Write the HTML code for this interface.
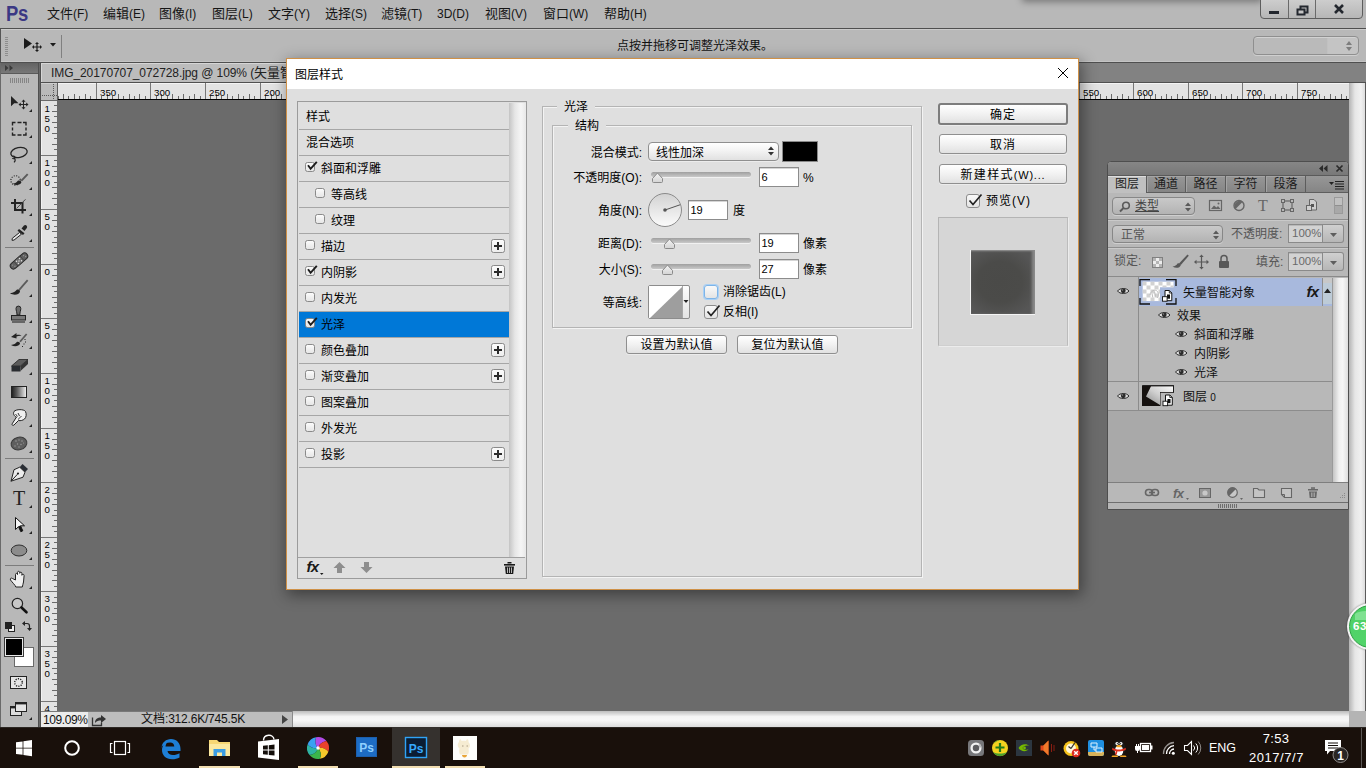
<!DOCTYPE html>
<html lang="zh-CN">
<head>
<meta charset="utf-8">
<title>Photoshop - 图层样式</title>
<style>
*{box-sizing:border-box;margin:0;padding:0}
html,body{width:1366px;height:768px;overflow:hidden;background:#6b6b6b}
body{position:relative;font-family:"Liberation Sans","Noto Sans CJK SC",sans-serif;font-size:12px;color:#111;line-height:1}
.abs,.abs-all *{position:absolute}
div,svg,i{position:absolute;display:block}
/* ---------- menubar ---------- */
#menubar{left:0;top:0;width:1366px;height:28px;background:#b8b8b8}
#menubar .mi{top:6px;font-size:13px;line-height:16px;color:#151515;white-space:nowrap}
#pslogo{left:6px;top:1px;font-size:22.500px;font-weight:bold;color:#3b3884;line-height:25px;letter-spacing:-.5px;transform:scaleX(.82);transform-origin:0 0}
.l{font-size:12px}
#winctl{left:1260px;top:-1px;width:103px;height:20px;border:1px solid #5d5d5d;border-radius:0 0 4px 4px;background:linear-gradient(#cdcdcd,#b6b6b6)}
#winctl i{top:0;width:1px;height:18px;background:#6a6a6a}
/* ---------- options bar ---------- */
#optbar{left:0;top:28px;width:1366px;height:35px;background:#b8b8b8;border-top:1px solid #4f4f4f;border-bottom:1px solid #4f4f4f;border-left:1px solid #555;box-shadow:inset 0 -1px 0 #c4c4c4}
#optbar .hl{left:0;top:0;width:1366px;height:1px;background:#cbcbcb}
#hint{left:616px;top:9px;font-size:12px;line-height:16px;color:#111;white-space:nowrap}
#wsdrop{left:1252px;top:7px;width:106px;height:19px;border:1px solid #8f8f8f;border-radius:4px;background:linear-gradient(90deg,#bababa 0,#bababa 70%,#c4c4c4 71%,#c4c4c4 100%);box-shadow:inset 0 1px 0 #d2d2d2,0 1px 0 #cfcfcf}
/* ---------- tools ---------- */
#tools{left:0;top:63px;width:39px;height:664px;background:#b8b8b8;border-right:1px solid #505050;border-left:1px solid #6a6a6a}
#tools .hd{left:0;top:0;width:37px;height:11px;background:linear-gradient(#636363,#787878);border-bottom:1px solid #5a5a5a}
#tools .sep{left:11px;width:26px;height:1px;background:#8a8a8a}
/* ---------- doc area ---------- */
#tabbar{left:41px;top:63px;width:1325px;height:20px;background:#828282;border-bottom:1px solid #505050}
#tab{left:0;top:0;width:400px;height:19px;background:#bcbcbc;font-size:13px;line-height:19px;color:#222;white-space:nowrap;padding-left:10px;box-shadow:inset 1px 1px 0 #d6d6d6}
#gap{left:39px;top:63px;width:2px;height:664px;background:linear-gradient(90deg,#6a6a6a 50%,#505050 50%)}
#hruler{left:58px;top:83px;width:1291px;height:17px;background:#e3e3e3;border-bottom:1px solid #000;box-shadow:inset 0 1px 0 #f4f4f4;overflow:hidden}
#vruler{left:41px;top:101px;width:17px;height:611px;background:#e3e3e3;border-right:1px solid #6a6a6a;box-shadow:inset 1px 0 0 #f2f2f2;overflow:hidden}
#rcorner{left:41px;top:83px;width:17px;height:18px;background:#bababa;border-right:1px solid #5e5e5e;border-bottom:1px solid #6a6a6a;box-shadow:inset 0 1px 0 #cfcfcf}
#canvas{left:58px;top:100px;width:1291px;height:611px;background:#6b6b6b}
#vscroll{left:1349px;top:83px;width:17px;height:628px;background:linear-gradient(90deg,#b4b4b4,#e6e6e6 35%,#f0f0f0 70%,#dedede 93%,#5a5a5a 94%)}
#status{left:41px;top:711px;width:1325px;height:16px;background:#bdbdbd;box-shadow:inset 0 1px 0 #787878}
#hscroll{left:251px;top:0;width:1057px;height:16px;background:linear-gradient(#bcbcbc,#f4f4f4 35%,#f6f6f6 60%,#dcdcdc);border-left:1px solid #8a8a8a}
#scorner{left:1308px;top:0;width:17px;height:16px;background:#b4b4b4}

/* ---------- dialog ---------- */
#dlg{left:286px;top:58px;width:793px;height:532px;border:1px solid #cf9148;background:#dfdfdf;box-shadow:2px 4px 14px 1px rgba(0,0,0,.42);font-size:12px;color:#000}
#dlg .tb{left:0;top:0;width:791px;height:30px;background:#fff}
#dlg .tt{left:8px;top:8px;font-size:12px;line-height:16px;color:#000}
#lst{border:1px solid #9b9b9b;background:#dfdfdf}
#lst .in{left:0;top:1px;width:212px;height:454px;border-top:1px solid #a8a8a8;border-left:1px solid #c9c9c9}
.row{left:1px;width:211px;height:26px;border-bottom:1px solid #a6a6a6;line-height:16px;white-space:nowrap}
.row .t{top:5px;font-size:12px}
.row.sel{background:#0078d7}
.cb{width:10px;height:10px;border:1px solid #8a8a8a;border-radius:2.500px;background:linear-gradient(#fbfbfb,#e6e6e6)}
.cb14{width:14px;height:14px;border:1px solid #8c8c8c;border-radius:3px;background:linear-gradient(#f9f9f9,#e4e4e4)}
.plus{width:14px;height:14px;border:1px solid #8a8a8a;border-radius:2.500px;background:linear-gradient(#fbfbfb,#ededed)}
.plus:before,.plus:after{content:"";position:absolute;background:#2a2a2a}
.plus:before{left:2px;top:5px;width:8px;height:2px}
.plus:after{left:5px;top:2px;width:2px;height:8px}
.fs{border:1px solid #b4b4b4;box-shadow:inset 1px 1px 0 #f3f3f3,1px 1px 0 #f3f3f3}
.lg{background:#dfdfdf;font-size:12px;line-height:14px;text-align:center;white-space:nowrap}
.lbl{font-size:12px;line-height:16px;white-space:nowrap;text-align:right}
.txt{font-size:12px;line-height:16px;white-space:nowrap}
.inp{width:40px;height:20px;border:1px solid #8c8c8c;background:#fff;font-size:11px;line-height:19px;padding-left:1.500px;box-shadow:inset 0 1px 0 #d5d5d5}
.trk{height:5px;border-radius:3px;background:linear-gradient(#9f9f9f,#c9c9c9);box-shadow:0 1px 0 #f1f1f1}
.btn{border:1px solid #8f8f8f;border-radius:3px;background:linear-gradient(#ffffff,#f3f3f3 45%,#e1e1e1);font-size:12px;line-height:18px;text-align:center;white-space:nowrap;box-shadow:0 1px 0 #ececec}

/* ---------- layers panel ---------- */
#lp{left:1107px;top:161px;width:242px;height:349px;background:#b8b8b8;border:1px solid #4e4e4e;border-radius:4px 4px 0 0;overflow:hidden;font-size:12px;color:#111}
#lp .hd{left:0;top:0;width:240px;height:13px;background:linear-gradient(#868686,#787878)}
#lp .tabs{left:0;top:13px;width:240px;height:18px;background:linear-gradient(#979797,#858585);border-top:1px solid #5a5a5a;border-bottom:1px solid #5e5e5e}
#lp .tab{top:0;height:16px;width:40px;border-right:1px solid #5c5c5c;font-size:12px;line-height:17px;text-align:center;color:#1c1c1c;white-space:nowrap;box-shadow:inset 1px 1px 0 #a4a4a4}
#lp .tab.on{background:#c0c0c0;height:17px;box-shadow:inset 0 1px 0 #dcdcdc}
#lp .sel{border:1px solid #878787;border-radius:4px;background:linear-gradient(#c9c9c9,#b3b3b3);box-shadow:0 1px 0 #cfcfcf;font-size:12px;line-height:16px;color:#3a3a3a;white-space:nowrap}
#lp .hr{left:0;width:240px;height:2px;background:#8e8e8e;border-bottom:1px solid #c9c9c9}
#lp .t{font-size:12px;line-height:16px;white-space:nowrap}
#lp .gt{font-size:12px;line-height:16px;white-space:nowrap;color:#555}
#lp .num{border:1px solid #8a8a8a;background:#d2d2d2;font-size:11.500px;line-height:17px;color:#6a6a6a;padding-left:3px;box-shadow:inset 0 1px 0 #b9b9b9}
#lp .dd{border:1px solid #8a8a8a;border-left:none;border-radius:0 3px 3px 0;background:linear-gradient(#d0d0d0,#b6b6b6)}
/* ---------- taskbar ---------- */
#taskbar{left:0;top:727px;width:1366px;height:41px;background:#19100b;box-shadow:inset 0 1px 0 #2c2723}
</style>
</head>
<body>
<div id="menubar">
<div id="pslogo">Ps</div>
<div class="mi" style="left:47px">文件<span class="l">(F)</span></div>
<div class="mi" style="left:103px">编辑<span class="l">(E)</span></div>
<div class="mi" style="left:159px">图像<span class="l">(I)</span></div>
<div class="mi" style="left:212px">图层<span class="l">(L)</span></div>
<div class="mi" style="left:268px">文字<span class="l">(Y)</span></div>
<div class="mi" style="left:325px">选择<span class="l">(S)</span></div>
<div class="mi" style="left:381px">滤镜<span class="l">(T)</span></div>
<div class="mi" style="left:437px"><span class="l">3D</span><span class="l">(D)</span></div>
<div class="mi" style="left:485px">视图<span class="l">(V)</span></div>
<div class="mi" style="left:543px">窗口<span class="l">(W)</span></div>
<div class="mi" style="left:604px">帮助<span class="l">(H)</span></div>
<div style="left:1024px;top:-8px;width:236px;height:8px;box-shadow:0 0 7px 2px rgba(0,0,0,.35)"></div>
<div id="winctl"><i style="left:27px"></i><i style="left:54px"></i>
<svg width="101" height="18" viewBox="0 0 101 18" style="left:0;top:0">
<rect x="8" y="11" width="10" height="3" fill="#23272e"/>
<rect x="39.5" y="6.5" width="7" height="6" fill="none" stroke="#23272e" stroke-width="2"/>
<rect x="36.5" y="9.5" width="7" height="5" fill="#c4c4c4" stroke="#23272e" stroke-width="2"/>
<path d="M74 5 L82 13 M82 5 L74 13" stroke="#23272e" stroke-width="2.6"/>
</svg></div>
</div>

<div id="optbar"><div class="hl"></div>
<svg width="70" height="32" viewBox="0 0 70 32" style="left:0;top:1px">
<g fill="#8d8d8d"><rect x="4" y="7" width="3" height="1"/><rect x="4" y="9" width="3" height="1"/><rect x="4" y="11" width="3" height="1"/><rect x="4" y="13" width="3" height="1"/><rect x="4" y="15" width="3" height="1"/><rect x="4" y="17" width="3" height="1"/><rect x="4" y="19" width="3" height="1"/><rect x="4" y="21" width="3" height="1"/><rect x="4" y="23" width="3" height="1"/><rect x="4" y="25" width="3" height="1"/></g>
<path d="M23 8 L23 19 L31 13.5 Z" fill="#1b1b1b"/>
<path d="M36 13 L36 21 M32 17 L40 17" stroke="#1b1b1b" stroke-width="1.2" fill="none"/>
<path d="M36 12 l-2 2 h4 z M36 22 l-2 -2 h4 z M31 17 l2 -2 v4 z M41 17 l-2 -2 v4 z" fill="#1b1b1b"/>
<path d="M49 13 h6 l-3 3.5 z" fill="#1b1b1b"/>
<rect x="60" y="5" width="1" height="23" fill="#808080"/>
</svg>
<div id="hint">点按并拖移可调整光泽效果。</div>
<div id="wsdrop"><svg width="8" height="12" viewBox="0 0 8 12" style="left:91px;top:3px"><path d="M1 5 L4 1 L7 5 Z M1 7 L4 11 L7 7 Z" fill="#7d7d7d"/></svg></div>
</div>

<div id="tools"><div class="hd"><svg width="14" height="8" viewBox="0 0 14 8" style="left:4px;top:2px"><path d="M0 0l3.500 3L0 6zM4.500 0L8 3 4.500 6z" fill="#3a3a3a"/></svg></div>
<svg width="38" height="665" viewBox="0 63 38 665" style="left:-1px;top:0">
<path d="M11 96v10.300l3.200-3h4.300z" fill="#232323"/><path d="M23.500 101v7M20 104.500h7" stroke="#232323" stroke-width="1" fill="none"/><path d="M23.500 99.500l-2 2.300h4zM23.500 109.500l-2-2.300h4zM18.500 104.500l2.300-2v4zM28.500 104.500l-2.300-2v4z" fill="#232323"/>
<path d="M32 109v3h-3z" fill="#232323"/>
<path d="M12.500 125.500v-3h3M17.500 122.500h4M23 122.500h3v3M26 127.500v3M26 132.500v2.500h-3M21.500 135h-4M15.500 135h-3v-2.500M12.500 130.500v-3" stroke="#232323" stroke-width="1.400" fill="none"/>
<path d="M32 135v3h-3z" fill="#232323"/>
<ellipse cx="19" cy="152.500" rx="8.300" ry="5" transform="rotate(-12 19 152.500)" fill="none" stroke="#232323" stroke-width="1.300"/><path d="M12 156.500c1.500-1 3.500 0 2.800 1.500-.5 1-2 .8-2.300 0M14.500 158c1 1.500 1 3-.5 4.300" fill="none" stroke="#232323" stroke-width="1.100"/>
<path d="M32 161v3h-3z" fill="#232323"/>
<circle cx="15.600" cy="180.400" r="4.700" fill="none" stroke="#232323" stroke-width="1.200" stroke-dasharray="1.100 1.360"/><path d="M27 173.500l1.400 1.200-6.400 6.800-1.500-1.300z" fill="#5a5a5a"/><path d="M12.800 183.800c2.500-.5 4-1.500 5-3 1.500-.8 3.300.3 3.600 1.700-1 2.300-5 3.500-8.600 1.300z" fill="#232323"/>
<path d="M32 187v3h-3z" fill="#232323"/>
<path d="M11 203h11.500v10.500M15 199v11h11" fill="none" stroke="#232323" stroke-width="2"/><path d="M25.500 199.300L16.500 208.500" stroke="#3a3a3a" stroke-width=".9"/>
<path d="M32 213v3h-3z" fill="#232323"/>
<path d="M24 225.500c1.500-1.500 4 .5 2.800 2.500l-2.300 3-3-2.500z" fill="#232323"/><path d="M19 229l5.500 4.300-1.500 1.800-5.500-4.300z" fill="#232323"/><path d="M19.500 232.500l2 1.600-7.500 6-2 .2.300-2z" fill="#e8e8e8" stroke="#232323" stroke-width="1"/>
<path d="M32 239v3h-3z" fill="#232323"/>
<g transform="rotate(-41 19 261)"><rect x="8.500" y="257.800" width="21" height="6.400" rx="3.200" fill="#606060" stroke="#2a2a2a" stroke-width="1"/><rect x="15" y="257.800" width="8" height="6.400" fill="#6e6e6e" stroke="#2a2a2a" stroke-width=".6"/><g fill="#e4e4e4"><circle cx="17" cy="259.600" r=".7"/><circle cx="21" cy="259.600" r=".7"/><circle cx="17" cy="262.400" r=".7"/><circle cx="21" cy="262.400" r=".7"/><circle cx="19" cy="261" r=".7"/></g><g fill="#9a9a9a"><circle cx="11.500" cy="260" r=".6"/><circle cx="12.500" cy="262.300" r=".6"/><circle cx="26" cy="260" r=".6"/><circle cx="27" cy="262" r=".6"/></g></g>
<path d="M32 268v3h-3z" fill="#232323"/>
<path d="M27 279.500l1.300 1.200-8.600 10-1.400-1.200z" fill="#5a5a5a"/><path d="M10 293.300c3.500-.3 5.500-1.800 6.500-3.300 1.500-1 3.500 0 3.500 1.800-1 3-6 4-10 1.500z" fill="#232323"/>
<path d="M32 294v3h-3z" fill="#232323"/>
<path d="M16 308.500a2.400 2.400 0 0 1 4.800 0c0 2-1 3.500-1 6.500h-2.800c0-3-1-4.500-1-6.500z" fill="#6a6a6a" stroke="#232323" stroke-width="1"/><rect x="11.500" y="315.500" width="14" height="4.500" fill="#7a7a7a" stroke="#232323" stroke-width="1"/><path d="M12 322h13" stroke="#232323" stroke-width="1.100"/>
<path d="M32 320v3h-3z" fill="#232323"/>
<path d="M26 333.500l1.300 1.100-6.600 7.700-1.400-1.100z" fill="#5a5a5a"/><path d="M11 345c3-.3 4.800-1.500 5.800-3 1.500-.8 3.200.2 3.200 1.700-1 2.500-5.500 3.500-9 1.300z" fill="#232323"/><path d="M11 337l5.500-4v2c2.500-.5 4 0 5 .8-2-.2-3.500 0-5 .7v2z" fill="#232323"/><g fill="#232323"><rect x="24.500" y="339" width="1" height="1"/><rect x="25" y="341.500" width="1" height="1"/><rect x="23.500" y="343.500" width="1" height="1"/><rect x="22" y="346" width="1" height="1"/></g>
<path d="M32 346v3h-3z" fill="#232323"/>
<path d="M19 359.500h9l-7.500 6.500h-9z" fill="#5c5c5c" stroke="#232323" stroke-width=".8"/><path d="M11.500 366h9v5.500h-9z" fill="#2a2d31"/><path d="M20.500 366l7.500-6.500v4.500l-7.500 7z" fill="#343434"/>
<path d="M32 372v3h-3z" fill="#232323"/>
<defs><linearGradient id="gg" x1="0" y1="0" x2="1" y2="0"><stop offset="0" stop-color="#1c1c1c"/><stop offset=".35" stop-color="#5a5a5a"/><stop offset="1" stop-color="#f4f4f4"/></linearGradient></defs><rect x="11.500" y="386.500" width="15" height="11" fill="url(#gg)" stroke="#232323" stroke-width="1"/>
<path d="M32 398v3h-3z" fill="#232323"/>
<path d="M14 411.500c2-2.500 10-2.500 11.500 0 1.200 2.500.8 6-1 7.500-1.500 1.300-4 2-6 1.500l-4.500 4.500c-1 1-2.500 0-1.800-1.200l4.300-6.800c-2-.5-3.800-3-2.500-5.500z" fill="#f0f0f0" stroke="#232323" stroke-width="1"/><path d="M15.500 414l2 2.500M18 413l1.500 3M21.500 416.500c-1.500.5-2.500 1.500-3 3" fill="none" stroke="#232323" stroke-width=".9"/>
<path d="M32 424v3h-3z" fill="#232323"/>
<ellipse cx="19" cy="443.500" rx="8" ry="6.300" transform="rotate(-15 19 443.500)" fill="#5e5e5e" stroke="#3a3a3a" stroke-width="1"/><g fill="#9a9a9a"><circle cx="16" cy="441" r=".8"/><circle cx="19" cy="440" r=".7"/><circle cx="22" cy="441" r=".8"/><circle cx="17.500" cy="444" r=".7"/><circle cx="21" cy="444.500" r=".7"/><circle cx="15" cy="446" r=".7"/><circle cx="19" cy="447" r=".7"/><circle cx="23.500" cy="443" r=".6"/></g>
<path d="M32 450v3h-3z" fill="#232323"/>
<path d="M22.500 464l5.500 5-3 3.200-5.300-5z" fill="#2a2e35"/><path d="M19.700 467.200l5.300 5-2 5-12 4 3-11.500z" fill="#ececec" stroke="#232323" stroke-width="1"/><path d="M11 481.200l6.500-7" stroke="#232323" stroke-width="1"/><circle cx="18" cy="473.500" r="1.100" fill="#232323"/>
<path d="M32 479v3h-3z" fill="#232323"/>
<text x="19" y="505" text-anchor="middle" font-family="Liberation Serif,serif" font-size="20" fill="#232323">T</text>
<path d="M32 505v3h-3z" fill="#232323"/>
<path d="M15.500 517.500v12l3-2.800 2.300 5 2-.9-2.300-5h4z" fill="#f6f6f6" stroke="#111" stroke-width="1"/><path d="M18.500 526.500l2.300 5.200 2-.9-2.400-5.200z" fill="#111"/>
<path d="M32 531v3h-3z" fill="#232323"/>
<ellipse cx="19" cy="550.500" rx="7.800" ry="5.500" fill="#8c8c8c" stroke="#2e2e2e" stroke-width="1"/>
<path d="M32 557v3h-3z" fill="#232323"/>
<path d="M15.500 580v-5.500c0-1.500 2-1.500 2 0v-2c0-1.600 2.200-1.600 2.200 0v.8c0-1.500 2.200-1.500 2.200 0v2c.3-1.500 2.300-1.300 2.200.3l-.6 6.400c-.2 2-1 3-1.200 5h-6.500c-.6-2-3.500-4.500-5.300-7-.8-1.500.8-2.500 2-1.500z" fill="#f0f0f0" stroke="#232323" stroke-width="1"/>
<path d="M32 586v3h-3z" fill="#232323"/>
<circle cx="17.400" cy="603.500" r="5.200" fill="#c8c8c8" stroke="#232323" stroke-width="1.200"/><path d="M21.500 607.500l5 4.800" stroke="#111" stroke-width="2.600" stroke-linecap="round"/>
<rect x="5" y="247" width="29" height="1" fill="#7c7c7c"/>
<rect x="5" y="458" width="29" height="1" fill="#7c7c7c"/>
<rect x="5" y="565" width="29" height="1" fill="#7c7c7c"/>
<g fill="#858585"><rect x="10" y="78" width="1" height="5"/><rect x="12" y="78" width="1" height="5"/><rect x="14" y="78" width="1" height="5"/><rect x="16" y="78" width="1" height="5"/><rect x="18" y="78" width="1" height="5"/><rect x="20" y="78" width="1" height="5"/><rect x="22" y="78" width="1" height="5"/><rect x="24" y="78" width="1" height="5"/><rect x="26" y="78" width="1" height="5"/><rect x="28" y="78" width="1" height="5"/></g>
<rect x="8.500" y="625.500" width="6" height="6" fill="#f0f0f0" stroke="#232323"/><rect x="5" y="622" width="7" height="7" fill="#232323"/>
<path d="M24.500 623.500h2.500c1.500 0 2.500 1 2.500 2.500v2.500" fill="none" stroke="#232323" stroke-width="1.200"/><path d="M25 621v5l-3-2.500zM27 628h5l-2.500 3z" fill="#232323"/>
<rect x="14.500" y="647.500" width="19" height="19" fill="#fff" stroke="#6a6a6a"/>
<rect x="4.500" y="637.500" width="19" height="19" fill="#e8e8e8" stroke="#3a3a3a"/><rect x="6" y="639" width="16" height="16" fill="#000"/>
<rect x="10.500" y="676.500" width="16" height="12" fill="#e6e6e6" stroke="#232323"/><circle cx="18.500" cy="682.500" r="3.800" fill="none" stroke="#232323" stroke-width="1.400" stroke-dasharray="1.200 1.200"/>
<rect x="10.500" y="706.500" width="11" height="9" fill="#dcdcdc" stroke="#232323"/><rect x="10" y="706" width="12" height="2.400" fill="#232323"/><rect x="15.500" y="702.500" width="11" height="9" fill="#e4e4e4" stroke="#232323"/><rect x="15" y="702" width="12" height="2.400" fill="#232323"/><path d="M32 717v3h-3z" fill="#232323"/>
</svg>
</div>
<div id="gap"></div>
<div id="tabbar"><div id="tab"><span class="l" style="letter-spacing:-0.080px">IMG_20170707_072728.jpg @ 109% (</span>矢量智能对象<span class="l">, RGB/8) *</span></div></div>
<div id="hruler"><svg width="1291" height="16" viewBox="0 0 1291 16" style="left:0;top:0"><path d="M38.5 0V16M92.5 0V16M147.5 0V16M202.5 0V16M256.5 0V16M311.5 0V16M365.5 0V16M420.5 0V16M475.5 0V16M529.5 0V16M584.5 0V16M638.5 0V16M693.5 0V16M748.5 0V16M802.5 0V16M857.5 0V16M911.5 0V16M966.5 0V16M1021.5 0V16M1075.5 0V16M1130.5 0V16M1184.5 0V16M1239.5 0V16" stroke="#777" stroke-width="1" fill="none"/><path d="M0.5 13V16M5.5 11V16M10.5 13V16M16.5 11V16M21.5 13V16M27.5 11V16M32.5 13V16M43.5 13V16M49.5 11V16M54.5 13V16M60.5 11V16M65.5 13V16M71.5 11V16M76.5 13V16M81.5 11V16M87.5 13V16M98.5 13V16M103.5 11V16M109.5 13V16M114.5 11V16M120.5 13V16M125.5 11V16M131.5 13V16M136.5 11V16M142.5 13V16M152.5 13V16M158.5 11V16M163.5 13V16M169.5 11V16M174.5 13V16M180.5 11V16M185.5 13V16M191.5 11V16M196.5 13V16M207.5 13V16M213.5 11V16M218.5 13V16M223.5 11V16M229.5 13V16M234.5 11V16M240.5 13V16M245.5 11V16M251.5 13V16M262.5 13V16M267.5 11V16M273.5 13V16M278.5 11V16M284.5 13V16M289.5 11V16M294.5 13V16M300.5 11V16M305.5 13V16M316.5 13V16M322.5 11V16M327.5 13V16M333.5 11V16M338.5 13V16M344.5 11V16M349.5 13V16M354.5 11V16M360.5 13V16M371.5 13V16M376.5 11V16M382.5 13V16M387.5 11V16M393.5 13V16M398.5 11V16M404.5 13V16M409.5 11V16M415.5 13V16M425.5 13V16M431.5 11V16M436.5 13V16M442.5 11V16M447.5 13V16M453.5 11V16M458.5 13V16M464.5 11V16M469.5 13V16M480.5 13V16M486.5 11V16M491.5 13V16M496.5 11V16M502.5 13V16M507.5 11V16M513.5 13V16M518.5 11V16M524.5 13V16M535.5 13V16M540.5 11V16M546.5 13V16M551.5 11V16M557.5 13V16M562.5 11V16M567.5 13V16M573.5 11V16M578.5 13V16M589.5 13V16M595.5 11V16M600.5 13V16M606.5 11V16M611.5 13V16M617.5 11V16M622.5 13V16M627.5 11V16M633.5 13V16M644.5 13V16M649.5 11V16M655.5 13V16M660.5 11V16M666.5 13V16M671.5 11V16M677.5 13V16M682.5 11V16M688.5 13V16M698.5 13V16M704.5 11V16M709.5 13V16M715.5 11V16M720.5 13V16M726.5 11V16M731.5 13V16M737.5 11V16M742.5 13V16M753.5 13V16M759.5 11V16M764.5 13V16M769.5 11V16M775.5 13V16M780.5 11V16M786.5 13V16M791.5 11V16M797.5 13V16M808.5 13V16M813.5 11V16M819.5 13V16M824.5 11V16M830.5 13V16M835.5 11V16M840.5 13V16M846.5 11V16M851.5 13V16M862.5 13V16M868.5 11V16M873.5 13V16M879.5 11V16M884.5 13V16M890.5 11V16M895.5 13V16M900.5 11V16M906.5 13V16M917.5 13V16M922.5 11V16M928.5 13V16M933.5 11V16M939.5 13V16M944.5 11V16M950.5 13V16M955.5 11V16M961.5 13V16M971.5 13V16M977.5 11V16M982.5 13V16M988.5 11V16M993.5 13V16M999.5 11V16M1004.5 13V16M1010.5 11V16M1015.5 13V16M1026.5 13V16M1032.5 11V16M1037.5 13V16M1042.5 11V16M1048.5 13V16M1053.5 11V16M1059.5 13V16M1064.5 11V16M1070.5 13V16M1081.5 13V16M1086.5 11V16M1092.5 13V16M1097.5 11V16M1103.5 13V16M1108.5 11V16M1113.5 13V16M1119.5 11V16M1124.5 13V16M1135.5 13V16M1141.5 11V16M1146.5 13V16M1152.5 11V16M1157.5 13V16M1163.5 11V16M1168.5 13V16M1173.5 11V16M1179.5 13V16M1190.5 13V16M1195.5 11V16M1201.5 13V16M1206.5 11V16M1212.5 13V16M1217.5 11V16M1223.5 13V16M1228.5 11V16M1234.5 13V16M1244.5 13V16M1250.5 11V16M1255.5 13V16M1261.5 11V16M1266.5 13V16M1272.5 11V16M1277.5 13V16M1283.5 11V16M1288.5 13V16" stroke="#6a6a6a" stroke-width="1" fill="none"/><g font-family="Liberation Sans,sans-serif" font-size="9.700" fill="#000"><text x="42" y="13">350</text><text x="96" y="13">300</text><text x="151" y="13">250</text><text x="206" y="13">200</text><text x="260" y="13">150</text><text x="315" y="13">100</text><text x="369" y="13">50</text><text x="424" y="13">0</text><text x="479" y="13">50</text><text x="533" y="13">100</text><text x="588" y="13">150</text><text x="642" y="13">200</text><text x="697" y="13">250</text><text x="752" y="13">300</text><text x="806" y="13">350</text><text x="861" y="13">400</text><text x="915" y="13">450</text><text x="970" y="13">500</text><text x="1025" y="13">550</text><text x="1079" y="13">600</text><text x="1134" y="13">650</text><text x="1188" y="13">700</text><text x="1243" y="13">750</text></g></svg></div>
<div id="vruler"><svg width="16" height="611" viewBox="0 0 16 611" style="left:0;top:0"><path d="M0 54.5H16M0 108.5H16M0 163.5H16M0 217.5H16M0 272.5H16M0 327.5H16M0 381.5H16M0 436.5H16M0 490.5H16M0 545.5H16M0 600.5H16" stroke="#777" stroke-width="1" fill="none"/><path d="M13 4.5H16M11 10.5H16M13 15.5H16M11 21.5H16M13 26.5H16M11 32.5H16M13 37.5H16M11 43.5H16M13 48.5H16M13 59.5H16M11 65.5H16M13 70.5H16M11 75.5H16M13 81.5H16M11 86.5H16M13 92.5H16M11 97.5H16M13 103.5H16M13 114.5H16M11 119.5H16M13 125.5H16M11 130.5H16M13 136.5H16M11 141.5H16M13 146.5H16M11 152.5H16M13 157.5H16M13 168.5H16M11 174.5H16M13 179.5H16M11 185.5H16M13 190.5H16M11 196.5H16M13 201.5H16M11 206.5H16M13 212.5H16M13 223.5H16M11 228.5H16M13 234.5H16M11 239.5H16M13 245.5H16M11 250.5H16M13 256.5H16M11 261.5H16M13 267.5H16M13 277.5H16M11 283.5H16M13 288.5H16M11 294.5H16M13 299.5H16M11 305.5H16M13 310.5H16M11 316.5H16M13 321.5H16M13 332.5H16M11 338.5H16M13 343.5H16M11 348.5H16M13 354.5H16M11 359.5H16M13 365.5H16M11 370.5H16M13 376.5H16M13 387.5H16M11 392.5H16M13 398.5H16M11 403.5H16M13 409.5H16M11 414.5H16M13 419.5H16M11 425.5H16M13 430.5H16M13 441.5H16M11 447.5H16M13 452.5H16M11 458.5H16M13 463.5H16M11 469.5H16M13 474.5H16M11 479.5H16M13 485.5H16M13 496.5H16M11 501.5H16M13 507.5H16M11 512.5H16M13 518.5H16M11 523.5H16M13 529.5H16M11 534.5H16M13 540.5H16M13 550.5H16M11 556.5H16M13 561.5H16M11 567.5H16M13 572.5H16M11 578.5H16M13 583.5H16M11 589.5H16M13 594.5H16M13 605.5H16" stroke="#6a6a6a" stroke-width="1" fill="none"/><g font-family="Liberation Sans,sans-serif" font-size="9.700" fill="#000"><text x="3.500" y="-44">2</text><text x="3.500" y="-34">0</text><text x="3.500" y="-24">0</text><text x="3.500" y="11">1</text><text x="3.500" y="21">5</text><text x="3.500" y="31">0</text><text x="3.500" y="65">1</text><text x="3.500" y="75">0</text><text x="3.500" y="85">0</text><text x="3.500" y="119">5</text><text x="3.500" y="129">0</text><text x="3.500" y="174">0</text><text x="3.500" y="228">5</text><text x="3.500" y="238">0</text><text x="3.500" y="283">1</text><text x="3.500" y="293">0</text><text x="3.500" y="303">0</text><text x="3.500" y="338">1</text><text x="3.500" y="348">5</text><text x="3.500" y="358">0</text><text x="3.500" y="392">2</text><text x="3.500" y="402">0</text><text x="3.500" y="412">0</text><text x="3.500" y="447">2</text><text x="3.500" y="457">5</text><text x="3.500" y="467">0</text><text x="3.500" y="501">3</text><text x="3.500" y="511">0</text><text x="3.500" y="521">0</text><text x="3.500" y="556">3</text><text x="3.500" y="566">5</text><text x="3.500" y="576">0</text><text x="3.500" y="611">4</text><text x="3.500" y="621">0</text><text x="3.500" y="631">0</text></g></svg></div>
<div id="rcorner"><svg width="16" height="16" viewBox="0 0 16 16" style="left:0;top:0"><path d="M12.500 1V16M1 12.500H16" stroke="#5a5a5a" stroke-width="1" stroke-dasharray="1 1" fill="none"/></svg></div>
<div id="canvas"></div>
<div id="vscroll"></div>
<div id="status">
<div style="left:0;top:1px;width:47px;height:15px;background:#ececec;font-size:12px;letter-spacing:-0.400px;line-height:16px;padding-left:2px;color:#111;white-space:nowrap">109.09%</div>
<svg width="16" height="14" viewBox="0 0 16 14" style="left:50px;top:2px"><path d="M1.500 4.500v8h9v-3" fill="none" stroke="#333" stroke-width="1.300"/><path d="M4 10c0-4 2.500-5.500 6-5.500V2l5 4-5 4V7.500C7.500 7.500 5.500 8 4 10z" fill="#333"/></svg>
<div style="left:100px;top:1px;font-size:12px;line-height:15px;white-space:nowrap;color:#111">文档<span class="l" style="letter-spacing:-0.200px">:312.6K/745.5K</span></div>
<svg width="8" height="10" viewBox="0 0 8 10" style="left:240px;top:4px"><path d="M1 0l6 4.500-6 4.500z" fill="#444"/></svg>
<div id="hscroll"></div><div id="scorner"></div>
</div>
<div id="lp">
<div class="hd"><svg width="30" height="9" viewBox="0 0 30 9" style="left:211px;top:2px"><path d="M4 1v7L0 4.500zM8.500 1v7L4.500 4.500z" fill="#2b2b2b"/><path d="M17.500 1.500l6 6M23.500 1.500l-6 6" stroke="#2b2b2b" stroke-width="1.700"/></svg></div>
<div class="tabs"><div class="tab on" style="left:0px;width:39px">图层</div><div class="tab" style="left:39px;width:39px">通道</div><div class="tab" style="left:78px;width:40px">路径</div><div class="tab" style="left:118px;width:40px">字符</div><div class="tab" style="left:158px;width:40px">段落</div><svg width="16" height="10" viewBox="0 0 16 10" style="left:221px;top:4px"><path d="M0 2h5L2.500 5z" fill="#222"/><path d="M6 1.500h9M6 4h9M6 6.500h9M6 9h9" stroke="#222" stroke-width="1.200"/></svg></div>
<div class="sel" style="left:4px;top:35px;width:83px;height:18px"><svg width="12" height="12" viewBox="0 0 12 12" style="left:6px;top:3px"><circle cx="7" cy="4.500" r="3.300" fill="none" stroke="#5a5a5a" stroke-width="1.600"/><path d="M4.500 7L1 10.500" stroke="#5a5a5a" stroke-width="2"/></svg><div class="gt" style="left:22px;top:0px;text-decoration:underline;color:#444">类型</div><svg width="8" height="10" viewBox="0 0 8 10" style="left:71px;top:4px"><path d="M1 4l3-3.500L7 4zM1 6l3 3.500L7 6z" fill="#5a5a5a"/></svg></div>
<svg width="140" height="20" viewBox="1206 196 140 20" style="left:98px;top:34px">
<rect x="1209.500" y="200.500" width="12" height="10" fill="none" stroke="#666" stroke-width="1.200"/><path d="M1211 209l3-3.500 2.500 2 1.500-1.500 2.500 3z" fill="#666"/><circle cx="1218.500" cy="203.500" r="1" fill="#666"/>
<circle cx="1239" cy="205.500" r="5" fill="none" stroke="#666" stroke-width="1.400"/><path d="M1235.500 209a5 5 0 0 1 7-7z" fill="#666"/>
<text x="1263" y="211" text-anchor="middle" font-family="Liberation Serif,serif" font-size="16" fill="#666">T</text>
<rect x="1283" y="201" width="9" height="9" fill="none" stroke="#666" stroke-width="1.200"/><g fill="#b8b8b8" stroke="#666" stroke-width="1"><rect x="1281.500" y="199.500" width="3" height="3"/><rect x="1290.500" y="199.500" width="3" height="3"/><rect x="1281.500" y="208.500" width="3" height="3"/><rect x="1290.500" y="208.500" width="3" height="3"/></g>
<path d="M1309.500 199.500h4.500l2.500 2.500v8h-7z" fill="#cfcfcf" stroke="#666" stroke-width="1"/><rect x="1306.500" y="205.500" width="5" height="5" fill="#cfcfcf" stroke="#666"/><rect x="1311" y="204" width="3" height="3" fill="#555"/>
<rect x="1334.500" y="197.500" width="8" height="16" fill="#a8a8a8" stroke="#9a9a9a"/><rect x="1335" y="198" width="7" height="7" fill="#c0c0c0"/><rect x="1335" y="205" width="7" height="1" fill="#8f8f8f"/>
</svg>
<div class="hr" style="top:57px"></div>
<div class="sel" style="left:4px;top:63px;width:111px;height:18px"><div class="gt" style="left:8px;top:1px">正常</div><svg width="8" height="10" viewBox="0 0 8 10" style="left:99px;top:4px"><path d="M1 4l3-3.500L7 4zM1 6l3 3.500L7 6z" fill="#5a5a5a"/></svg></div>
<div class="gt" style="left:123px;top:64px">不透明度:</div>
<div class="num" style="left:180px;top:62px;width:35px;height:19px">100%</div><div class="dd" style="left:215px;top:62px;width:21px;height:19px"><svg width="7" height="4" viewBox="0 0 7 4" style="left:6.500px;top:7.500px"><path d="M0 0h7L3.500 4z" fill="#5e5e5e"/></svg></div>
<div class="hr" style="top:85px"></div>
<div class="gt" style="left:6px;top:91px">锁定:</div>
<svg width="90" height="16" viewBox="1150 254 90 16" style="left:42px;top:92px">
<rect x="1152.500" y="257.500" width="10" height="10" fill="#ececec" stroke="#808080"/><path d="M1153 258h3v3h-3zM1159 258h3v3h-3zM1156 261h3v3h-3zM1153 264h3v3h-3zM1159 264h3v3h-3z" fill="#b4b4b4"/>
<path d="M1187.500 254.500l1.300 1.200-8 9.300-1.800-1.500z" fill="#585858"/><path d="M1172.500 266.500c2.500-.2 4-1.300 5-3 1.500-.8 3.300.2 3.300 1.800-1 2.700-5 3.500-8.300 1.200z" fill="#585858"/>
<path d="M1201.500 256v12M1195.500 262h12" stroke="#585858" stroke-width="1.200"/><path d="M1201.500 254.500l-2.200 2.500h4.400zM1201.500 269.500l-2.200-2.500h4.400zM1194 262l2.500-2.200v4.400zM1209 262l-2.500-2.200v4.400z" fill="#585858"/>
<path d="M1221 261v-2.500a3 3 0 0 1 6 0V261" fill="none" stroke="#585858" stroke-width="1.500"/><rect x="1219" y="261" width="10" height="7" rx="1" fill="#585858"/>
</svg>
<div class="gt" style="left:148px;top:92px">填充:</div>
<div class="num" style="left:180px;top:90px;width:35px;height:19px">100%</div><div class="dd" style="left:215px;top:90px;width:21px;height:19px"><svg width="7" height="4" viewBox="0 0 7 4" style="left:6.500px;top:7.500px"><path d="M0 0h7L3.500 4z" fill="#5e5e5e"/></svg></div>
<div style="left:0;top:114px;width:240px;height:1px;background:#8a8a8a"></div>
<div style="left:0;top:115px;width:225px;height:133px;background:#b8b8b8"></div>
<div style="left:0;top:249px;width:225px;height:72px;background:#a9a9a9"></div>
<div style="left:31px;top:116px;width:194px;height:28px;background:#a8b9dd"></div>
<div style="left:30px;top:115px;width:1px;height:134px;background:#8c8c8c"></div>
<svg width="12.500" height="8" viewBox="0 0 14 9" style="left:8.8px;top:125.3px"><path d="M.6 4.500C3 .8 11 .8 13.400 4.500 11 8.200 3 8.200.6 4.500z" fill="#dcdcdc" stroke="#2a2a2a" stroke-width="1.100"/><circle cx="7" cy="4.300" r="2.700" fill="#2a2a2a"/><circle cx="6.200" cy="3.400" r=".8" fill="#8a8a8a"/></svg>
<svg width="38" height="26" viewBox="0 0 38 26" style="left:31px;top:117px">
<path d="M1 7V.7h10M27 .7h10V7M37 19v6H27M11 25H1v-6" fill="none" stroke="#111" stroke-width="1.300"/>
<defs><clipPath id="tc1"><path d="M3.500 2.500H34.750V8.200H21V22.250H3.500z"/></clipPath></defs>
<g clip-path="url(#tc1)"><rect x="3.500" y="2.500" width="31.250" height="19.750" fill="#fff"/><g fill="#d2d2d2"><rect x="3.5" y="2.5" width="4" height="4"/><rect x="11.5" y="2.5" width="4" height="4"/><rect x="19.5" y="2.5" width="4" height="4"/><rect x="27.5" y="2.5" width="4" height="4"/><rect x="7.5" y="6.5" width="4" height="4"/><rect x="15.5" y="6.5" width="4" height="4"/><rect x="23.5" y="6.5" width="4" height="4"/><rect x="31.5" y="6.5" width="3.25" height="4"/><rect x="3.5" y="10.5" width="4" height="4"/><rect x="11.5" y="10.5" width="4" height="4"/><rect x="19.5" y="10.5" width="4" height="4"/><rect x="27.5" y="10.5" width="4" height="4"/><rect x="7.5" y="14.5" width="4" height="4"/><rect x="15.5" y="14.5" width="4" height="4"/><rect x="23.5" y="14.5" width="4" height="4"/><rect x="31.5" y="14.5" width="3.25" height="4"/><rect x="3.5" y="18.5" width="4" height="3.75"/><rect x="11.5" y="18.5" width="4" height="3.75"/><rect x="19.5" y="18.5" width="4" height="3.75"/><rect x="27.5" y="18.5" width="4" height="3.75"/></g>
<path d="M11 16c.5-4 5-6.500 7.500-3.500 1.500 2 1 5-.5 6.500M13 14.500l.8 4M15.500 12.500l1 5" fill="none" stroke="#bdbdbd" stroke-width="1"/></g>
<path d="M26 11.500h4.300l2.500 2.500v7.700H26z" fill="#fff" stroke="#111" stroke-width="1"/><path d="M30.300 11.500v2.500h2.500" fill="none" stroke="#111" stroke-width=".8"/><rect x="28" y="15.500" width="3" height="4.200" fill="#111"/><rect x="23.500" y="17.700" width="4.600" height="4.500" fill="#fff" stroke="#111" stroke-width=".9"/>
</svg>
<div class="t" style="left:75px;top:123px">矢量智能对象</div>
<svg width="30" height="16" viewBox="0 0 30 16" style="left:198px;top:121px"><text x="0.500" y="13.500" font-family="Liberation Sans,sans-serif" font-style="italic" font-weight="bold" font-size="15" letter-spacing="-.8" fill="#1a1a1a">fx</text></svg>
<div style="left:214px;top:116px;width:11px;height:28px;background:linear-gradient(#c8c8c8 0,#c8c8c8 5px,#bdcbd7 5px,#bdcbd7 26px,#a8b9dd 26px);border-left:1px solid #8f8f8f"></div>
<svg width="8" height="6" viewBox="0 0 8 6" style="left:216px;top:126px"><path d="M0 5h7L3.500 .5z" fill="#222"/></svg>
<svg width="12.500" height="8" viewBox="0 0 14 9" style="left:49.8px;top:149.3px"><path d="M.6 4.500C3 .8 11 .8 13.400 4.500 11 8.200 3 8.200.6 4.500z" fill="#dcdcdc" stroke="#2a2a2a" stroke-width="1.100"/><circle cx="7" cy="4.300" r="2.700" fill="#2a2a2a"/><circle cx="6.200" cy="3.400" r=".8" fill="#8a8a8a"/></svg>
<div class="t" style="left:69px;top:146px">效果</div>
<svg width="12.500" height="8" viewBox="0 0 14 9" style="left:66.8px;top:168.3px"><path d="M.6 4.500C3 .8 11 .8 13.400 4.500 11 8.200 3 8.200.6 4.500z" fill="#dcdcdc" stroke="#2a2a2a" stroke-width="1.100"/><circle cx="7" cy="4.300" r="2.700" fill="#2a2a2a"/><circle cx="6.200" cy="3.400" r=".8" fill="#8a8a8a"/></svg>
<div class="t" style="left:86px;top:165px">斜面和浮雕</div>
<svg width="12.500" height="8" viewBox="0 0 14 9" style="left:66.8px;top:187.3px"><path d="M.6 4.500C3 .8 11 .8 13.400 4.500 11 8.200 3 8.200.6 4.500z" fill="#dcdcdc" stroke="#2a2a2a" stroke-width="1.100"/><circle cx="7" cy="4.300" r="2.700" fill="#2a2a2a"/><circle cx="6.200" cy="3.400" r=".8" fill="#8a8a8a"/></svg>
<div class="t" style="left:86px;top:184px">内阴影</div>
<svg width="12.500" height="8" viewBox="0 0 14 9" style="left:66.8px;top:206.3px"><path d="M.6 4.500C3 .8 11 .8 13.400 4.500 11 8.200 3 8.200.6 4.500z" fill="#dcdcdc" stroke="#2a2a2a" stroke-width="1.100"/><circle cx="7" cy="4.300" r="2.700" fill="#2a2a2a"/><circle cx="6.200" cy="3.400" r=".8" fill="#8a8a8a"/></svg>
<div class="t" style="left:86px;top:203px">光泽</div>
<div style="left:0;top:219px;width:225px;height:1px;background:#8c8c8c"></div>
<svg width="12.500" height="8" viewBox="0 0 14 9" style="left:8.8px;top:230.3px"><path d="M.6 4.500C3 .8 11 .8 13.400 4.500 11 8.200 3 8.200.6 4.500z" fill="#dcdcdc" stroke="#2a2a2a" stroke-width="1.100"/><circle cx="7" cy="4.300" r="2.700" fill="#2a2a2a"/><circle cx="6.200" cy="3.400" r=".8" fill="#8a8a8a"/></svg>
<svg width="36" height="24" viewBox="0 0 36 24" style="left:33px;top:222px"><defs><linearGradient id="l0" x1="0" y1="1" x2="1" y2="0"><stop offset="0" stop-color="#8a8a8a"/><stop offset=".5" stop-color="#cfcfcf"/><stop offset="1" stop-color="#fafafa"/></linearGradient><clipPath id="tc0"><path d="M1 1.200H33V8.700H19.500V22H1z"/></clipPath></defs>
<g clip-path="url(#tc0)"><rect x="1" y="1.200" width="32" height="20.800" fill="#15110f"/><path d="M10 2.200H32V8H19V21L5 12.500z" fill="url(#l0)"/></g>
<path d="M1.500 1.700H32.500V8.200" fill="none" stroke="#1a1a1a" stroke-width="1"/>
<path d="M24.500 11h4.300l2.500 2.500v7.700h-6.800z" fill="#fff" stroke="#111" stroke-width="1"/><path d="M28.800 11v2.500h2.500" fill="none" stroke="#111" stroke-width=".8"/><rect x="26.500" y="15" width="3" height="4.200" fill="#111"/><rect x="22" y="17.200" width="4.600" height="4.500" fill="#fff" stroke="#111" stroke-width=".9"/>
</svg>
<div class="t" style="left:75px;top:227px">图层 <span style="font-size:10px">0</span></div>
<div style="left:0;top:248px;width:225px;height:1px;background:#8c8c8c"></div>
<div style="left:224px;top:116px;width:16px;height:204px;background:linear-gradient(90deg,#c4c4c4,#f0f0f0 40%,#f6f6f6 65%,#dedede);border-left:1px solid #9a9a9a"></div>
<div style="left:0;top:320px;width:240px;height:21px;background:#b8b8b8;border-top:1px solid #7e7e7e;border-bottom:1px solid #6e6e6e"></div>
<svg width="210" height="18" viewBox="1140 483 210 18" style="left:32px;top:322px">
<g fill="none" stroke="#666" stroke-width="1.600"><rect x="1145.500" y="488.500" width="7" height="6" rx="3"/><rect x="1151.500" y="488.500" width="7" height="6" rx="3"/></g><rect x="1149" y="490.700" width="6" height="1.600" fill="#666"/>
<text x="1173" y="497" font-family="Liberation Sans,sans-serif" font-style="italic" font-weight="bold" font-size="13" letter-spacing="-.5" fill="#666">fx</text><path d="M1186 497h3l-1.500 2z" fill="#666"/>
<rect x="1199.500" y="487.500" width="11" height="9" fill="#999" stroke="#666"/><circle cx="1205" cy="492" r="2.600" fill="#c8c8c8"/>
<circle cx="1232.500" cy="491.500" r="4.800" fill="#c8c8c8" stroke="#666" stroke-width="1.200"/><path d="M1229 495a4.800 4.800 0 0 1 7-7z" fill="#666"/><path d="M1240 497h3l-1.500 2z" fill="#666"/>
<path d="M1253.500 487.500h4l1.500 1.500h5.500v7.500h-11z" fill="#c4c4c4" stroke="#666" stroke-width="1.100"/>
<path d="M1281.500 487.500h10v9h-7l-3-3z" fill="#c4c4c4" stroke="#666" stroke-width="1.100"/><path d="M1281.500 493.500h3v3" fill="none" stroke="#666"/>
<g fill="#666"><rect x="1308" y="488" width="10" height="1.500"/><rect x="1311" y="486.300" width="4" height="1.500"/><path d="M1309 490.500h8l-.7 6.500h-6.600z"/></g><path d="M1311.500 491.500v4.500M1313 491.500v4.500M1314.500 491.500v4.500" stroke="#b8b8b8" stroke-width=".7"/>
<g fill="#8a8a8a"><rect x="1344" y="492" width="1" height="1"/><rect x="1342" y="494" width="1" height="1"/><rect x="1344" y="494" width="1" height="1"/><rect x="1340" y="496" width="1" height="1"/><rect x="1342" y="496" width="1" height="1"/><rect x="1344" y="496" width="1" height="1"/></g>
</svg>
<div style="left:0;top:341px;width:240px;height:7px;background:#b6b6b6"></div>
<svg width="20" height="4" viewBox="0 0 20 4" style="left:110px;top:342px"><g fill="#6e6e6e"><rect x="0" y="0" width="1" height="4"/><rect x="2" y="0" width="1" height="4"/><rect x="4" y="0" width="1" height="4"/><rect x="6" y="0" width="1" height="4"/><rect x="8" y="0" width="1" height="4"/><rect x="10" y="0" width="1" height="4"/><rect x="12" y="0" width="1" height="4"/><rect x="14" y="0" width="1" height="4"/><rect x="16" y="0" width="1" height="4"/><rect x="18" y="0" width="1" height="4"/></g></svg>
</div>

<div id="dlg">
<div class="tb"><div class="tt">图层样式</div><svg width="12" height="12" viewBox="0 0 12 12" style="left:770px;top:8px"><path d="M1 1l10 10M11 1L1 11" stroke="#000" stroke-width="1"/></svg></div>
<div id="lst" style="left:10px;top:42px;width:230px;height:478px">
<div class="row" style="top:2px"><div class="t" style="left:7px">样式</div></div>
<div class="row" style="top:28px"><div class="t" style="left:7px">混合选项</div></div>
<div class="row" style="top:54px"><div class="cb" style="left:6px;top:6px"><svg width="13" height="13" viewBox="0 0 13 13" style="left:1px;top:-3px"><path d="M1 5.300L3.600 8.800L9.800 1.800" fill="none" stroke="#1c1c1c" stroke-width="1.900"/></svg></div><div class="t" style="left:22px">斜面和浮雕</div></div>
<div class="row" style="top:80px"><div class="cb" style="left:16px;top:6px"></div><div class="t" style="left:32px">等高线</div></div>
<div class="row" style="top:106px"><div class="cb" style="left:16px;top:6px"></div><div class="t" style="left:32px">纹理</div></div>
<div class="row" style="top:132px"><div class="cb" style="left:6px;top:6px"></div><div class="t" style="left:22px">描边</div><div class="plus" style="left:192px;top:5px"></div></div>
<div class="row" style="top:158px"><div class="cb" style="left:6px;top:6px"><svg width="13" height="13" viewBox="0 0 13 13" style="left:1px;top:-3px"><path d="M1 5.300L3.600 8.800L9.800 1.800" fill="none" stroke="#1c1c1c" stroke-width="1.900"/></svg></div><div class="t" style="left:22px">内阴影</div><div class="plus" style="left:192px;top:5px"></div></div>
<div class="row" style="top:184px"><div class="cb" style="left:6px;top:6px"></div><div class="t" style="left:22px">内发光</div></div>
<div class="row sel" style="top:210px"><div class="cb" style="left:6px;top:6px"><svg width="13" height="13" viewBox="0 0 13 13" style="left:1px;top:-3px"><path d="M1 5.300L3.600 8.800L9.800 1.800" fill="none" stroke="#1c1c1c" stroke-width="1.900"/></svg></div><div class="t" style="left:22px">光泽</div></div>
<div class="row" style="top:236px"><div class="cb" style="left:6px;top:6px"></div><div class="t" style="left:22px">颜色叠加</div><div class="plus" style="left:192px;top:5px"></div></div>
<div class="row" style="top:262px"><div class="cb" style="left:6px;top:6px"></div><div class="t" style="left:22px">渐变叠加</div><div class="plus" style="left:192px;top:5px"></div></div>
<div class="row" style="top:288px"><div class="cb" style="left:6px;top:6px"></div><div class="t" style="left:22px">图案叠加</div></div>
<div class="row" style="top:314px"><div class="cb" style="left:6px;top:6px"></div><div class="t" style="left:22px">外发光</div></div>
<div class="row" style="top:340px"><div class="cb" style="left:6px;top:6px"></div><div class="t" style="left:22px">投影</div><div class="plus" style="left:192px;top:5px"></div></div>
<div style="left:211px;top:1px;width:17px;height:454px;background:linear-gradient(90deg,#c4c4c4,#e6e6e6 35%,#f5f5f5 70%,#e8e8e8)"></div>
<div style="left:0;top:455px;width:227px;height:1px;background:#a0a0a0"></div>
<svg width="228" height="20" viewBox="0 0 228 20" style="left:0;top:456px">
<text x="8.500" y="14.300" font-family="Liberation Sans,sans-serif" font-style="italic" font-weight="bold" font-size="15" letter-spacing="-.8" fill="#1a1a1a">fx</text>
<path d="M22 15h3.500l-1.750 2z" fill="#1a1a1a"/>
<path d="M41.500 4l6 6h-3.500V15h-5v-5h-3.500z" fill="#8e8e8e"/>
<path d="M68.500 15l6-6h-3.500V4h-5v5h-3.500z" fill="#8e8e8e"/>
<g fill="#1a1a1a"><rect x="206" y="6" width="11" height="1.600"/><rect x="209.500" y="4" width="4" height="1.500"/><path d="M207 8.500h9l-.8 7.500h-7.400z"/></g>
<path d="M209.500 9.500v5.500M211.500 9.500v5.500M213.500 9.500v5.500" stroke="#dfdfdf" stroke-width=".8"/>
</svg>
</div>
<div class="fs" style="left:255px;top:47px;width:380px;height:471px"></div>
<div class="lg" style="left:270px;top:41px;width:38px">光泽</div>
<div class="fs" style="left:265px;top:66px;width:360px;height:203px"></div>
<div class="lg" style="left:281px;top:60px;width:38px">结构</div>
<div class="lbl" style="left:255px;top:86px;width:100px">混合模式:</div>
<div class="lbl" style="left:255px;top:111px;width:100px">不透明度(O):</div>
<div class="lbl" style="left:255px;top:144px;width:100px">角度(N):</div>
<div class="lbl" style="left:255px;top:177px;width:100px">距离(D):</div>
<div class="lbl" style="left:255px;top:203px;width:100px">大小(S):</div>
<div class="lbl" style="left:255px;top:236px;width:100px">等高线:</div>
<div class="btn" style="left:361px;top:83px;width:131px;height:19px;text-align:left;padding-left:7px;border-radius:4px;line-height:21px">线性加深<svg width="8" height="10" viewBox="0 0 8 10" style="left:118px;top:3px"><path d="M1 4l3-3.500L7 4zM1 6l3 3.500L7 6z" fill="#333"/></svg></div>
<div style="left:495px;top:82px;width:36px;height:21px;background:#000;border:1px solid #8a8a8a"></div>
<div class="trk" style="left:364px;top:113px;width:100px"></div>
<svg width="13" height="12" viewBox="0 0 13 12" style="left:364px;top:113px"><defs><linearGradient id="tg1" x1="0" y1="0" x2="0" y2="1"><stop offset="0" stop-color="#f4f4f4"/><stop offset="1" stop-color="#d4d4d4"/></linearGradient></defs><path d="M6.500 1L11.500 6.500V9.500a1 1 0 0 1-1 1h-8a1 1 0 0 1-1-1V6.500z" fill="url(#tg1)" stroke="#8a8a8a" stroke-width="1"/></svg>
<div class="inp" style="left:472px;top:108px">6</div><div class="txt" style="left:516px;top:111px">%</div>
<svg width="36" height="36" viewBox="0 0 36 36" style="left:360px;top:133px"><defs><linearGradient id="dg" x1="0" y1="0" x2="0" y2="1"><stop offset="0" stop-color="#d2d2d2"/><stop offset="1" stop-color="#fbfbfb"/></linearGradient></defs><circle cx="18" cy="18" r="16.500" fill="url(#dg)" stroke="#8a8a8a" stroke-width="1"/><path d="M18 18L33 12.800" stroke="#555" stroke-width="1"/><circle cx="18" cy="18" r="1.800" fill="#555"/></svg>
<div class="inp" style="left:401px;top:141px">19</div><div class="txt" style="left:446px;top:144px">度</div>
<div class="trk" style="left:364px;top:179px;width:100px"></div>
<svg width="13" height="12" viewBox="0 0 13 12" style="left:376px;top:179px"><defs><linearGradient id="tg2" x1="0" y1="0" x2="0" y2="1"><stop offset="0" stop-color="#f4f4f4"/><stop offset="1" stop-color="#d4d4d4"/></linearGradient></defs><path d="M6.500 1L11.500 6.500V9.500a1 1 0 0 1-1 1h-8a1 1 0 0 1-1-1V6.500z" fill="url(#tg2)" stroke="#8a8a8a" stroke-width="1"/></svg>
<div class="inp" style="left:472px;top:174px">19</div><div class="txt" style="left:516px;top:177px">像素</div>
<div class="trk" style="left:364px;top:205px;width:100px"></div>
<svg width="13" height="12" viewBox="0 0 13 12" style="left:374px;top:205px"><defs><linearGradient id="tg3" x1="0" y1="0" x2="0" y2="1"><stop offset="0" stop-color="#f4f4f4"/><stop offset="1" stop-color="#d4d4d4"/></linearGradient></defs><path d="M6.500 1L11.500 6.500V9.500a1 1 0 0 1-1 1h-8a1 1 0 0 1-1-1V6.500z" fill="url(#tg3)" stroke="#8a8a8a" stroke-width="1"/></svg>
<div class="inp" style="left:472px;top:200px">27</div><div class="txt" style="left:516px;top:203px">像素</div>
<div style="left:361px;top:226px;width:42px;height:34px;border:1px solid #8c8c8c;border-radius:2px;background:linear-gradient(#fdfdfd,#e4e4e4)"><svg width="40" height="32" viewBox="0 0 40 32" style="left:0;top:0"><rect x="0" y="0" width="33" height="32" fill="#fff"/><path d="M1 32L33 1V32z" fill="#9e9e9e"/><rect x="33" y="0" width="1" height="32" fill="#a8a8a8"/><path d="M34.500 14h5l-2.500 3z" fill="#222"/></svg></div>
<div class="cb14" style="left:417px;top:226px;border-color:#7db4e8;box-shadow:0 0 0 1px #a9d0f5"></div><div class="txt" style="left:436px;top:225px">消除锯齿(L)</div>
<div class="cb14" style="left:417px;top:246px"><svg width="17" height="15" viewBox="0 0 17 15" style="left:0;top:-2px"><path d="M2.500 7.500l3.500 4L14.500 1.500" fill="none" stroke="#222" stroke-width="1.700"/></svg></div><div class="txt" style="left:436px;top:245px">反相(I)</div>
<div class="btn" style="left:339px;top:276px;width:101px;height:19px;line-height:18px">设置为默认值</div>
<div class="btn" style="left:450px;top:276px;width:101px;height:19px;line-height:18px">复位为默认值</div>
<div class="btn" style="left:651px;top:44px;width:130px;height:22px;border:2px solid #7d7d7d;line-height:20px;letter-spacing:1px">确定</div>
<div class="btn" style="left:652px;top:75px;width:128px;height:20px;line-height:21px;letter-spacing:1px">取消</div>
<div class="btn" style="left:652px;top:105px;width:128px;height:20px;line-height:21px;letter-spacing:1.300px">新建样式<span style="font-size:11px;letter-spacing:.8px">(W)...</span></div>
<div class="cb14" style="left:679px;top:135px"><svg width="17" height="15" viewBox="0 0 17 15" style="left:0;top:-2px"><path d="M2.500 7.500l3.500 4L14.500 1.500" fill="none" stroke="#222" stroke-width="1.700"/></svg></div><div class="txt" style="left:699px;top:134px;letter-spacing:1px">预览(V)</div>
<div style="left:651px;top:158px;width:130px;height:129px;background:#d6d6d6;border:1px solid #b4b4b4;border-bottom-color:#cfcfcf;border-right-color:#bcbcbc;box-shadow:1px 1px 0 #ececec"></div>
<div style="left:683px;top:191px;width:65px;height:65px;background:radial-gradient(ellipse at 45% 50%,#4a4a48 0,#4b4b49 45%,#565656 80%);border-left:1px solid #f4f4f4;border-bottom:1px solid #f4f4f4;box-shadow:inset -4px 0 3px -1px #8b8b8b,inset 0 2px 2px -1px #9a9a9a"></div>
</div>

<div id="ball" style="left:1347px;top:603px;width:47px;height:47px;border-radius:50%;background:#f4f4f4;box-shadow:0 0 2px rgba(0,0,0,.5)"><div style="left:2px;top:2px;width:43px;height:43px;border-radius:50%;background:linear-gradient(#4ed065,#52d46a);border:1px solid #2f9f45;overflow:hidden"><div style="left:5px;top:5px;width:34px;height:9px;background:#7fe191;border-radius:40% 40% 0 0"></div></div><div style="left:6px;top:16px;font-family:'Liberation Sans',sans-serif;font-weight:bold;font-size:11.500px;line-height:14px;color:#fff;letter-spacing:.5px">63</div></div>
<div id="taskbar">
<div style="left:392px;top:0;width:48px;height:41px;background:#35312e"></div>
<div style="left:199px;top:39px;width:41px;height:2px;background:#f1ddb0"></div>
<div style="left:298px;top:39px;width:40px;height:2px;background:#f1ddb0"></div>
<div style="left:392px;top:39px;width:48px;height:2px;background:#f1ddb0"></div>
<div style="left:445px;top:39px;width:40px;height:2px;background:#f1ddb0"></div>
<svg width="500" height="40" viewBox="0 0 500 40" style="left:0;top:1px">
<!-- windows logo -->
<path d="M16 14.300l6.600-0.900v6.300H16zM23.400 13.300l8.600-1.300v7.700h-8.600zM16 20.500h6.600v6.300l-6.600-0.900zM23.400 20.500H32v7.700l-8.600-1.300z" fill="#fff"/>
<!-- cortana -->
<circle cx="72" cy="20" r="6.800" fill="none" stroke="#fff" stroke-width="2"/>
<!-- task view -->
<rect x="114.500" y="13.500" width="11" height="13" fill="none" stroke="#fff" stroke-width="1.200"/><path d="M112.500 15.500h-2v9h2M127.500 15.500h2v9h-2" fill="none" stroke="#fff" stroke-width="1.200"/>
<!-- edge -->
<path d="M161.500 19.500c0.500-5 4.500-8.500 9.500-8.500 5.500 0 9.500 4 9.500 10v2h-13c0.300 2.500 2.500 4 5.500 4 2.500 0 4.500-0.700 6.500-1.800v4.300c-2 1.200-4.500 1.800-7.500 1.800-6 0-10-3.800-10-9.300 0-4 2.500-7.300 6-8.600-1.500 1.500-2.300 3-2.500 5.100h8.800c-0.200-2.600-1.600-4-4.100-4-3.500 0-7 2-9.200 5z" fill="#1e7fd6"/>
<!-- folder -->
<path d="M209 12h8l2 2h11v14h-21z" fill="#f7d774"/><path d="M209 16h21v12h-21z" fill="#fce9a0"/><path d="M213.500 21h12v7h-3.500v-3.500h-5V28h-3.500z" fill="#3b9de3"/>
<!-- store -->
<path d="M258 13.500l21-2.500v21l-21-2.500z" fill="#fff"/><path d="M263.500 12.500c0-6.500 10-7 10.500-1" fill="none" stroke="#fff" stroke-width="1.400"/><path d="M263 17.800l4.800-.5v4.200H263zM268.800 17.200l5.700-.6v4.900h-5.700zM263 22.500h4.800v4.300l-4.800-.5zM268.800 22.500h5.700v5l-5.700-.6z" fill="#140e0a"/>
<!-- pinwheel -->
<g transform="translate(318 20)"><path d="M0 0Q-4.28 -4.28 -1.91 -10.83A11 11 0 0 1 8.43 -7.07Q1.57 -5.84 0 0z" fill="#b14ae6"/><path d="M0 0Q1.57 -5.84 8.43 -7.07A11 11 0 0 1 10.34 3.76Q5.84 -1.57 0 0z" fill="#e9412c"/><path d="M0 0Q5.84 -1.57 10.34 3.76A11 11 0 0 1 1.91 10.83Q4.28 4.28 0 0z" fill="#f7c92b"/><path d="M0 0Q4.28 4.28 1.91 10.83A11 11 0 0 1 -8.43 7.07Q-1.57 5.84 0 0z" fill="#3bb54a"/><path d="M0 0Q-1.57 5.84 -8.43 7.07A11 11 0 0 1 -10.34 -3.76Q-5.84 1.57 0 0z" fill="#2fb3a3"/><path d="M0 0Q-5.84 1.57 -10.34 -3.76A11 11 0 0 1 -1.91 -10.83Q-4.28 -4.28 0 0z" fill="#3aa0f2"/><circle r="1.700" fill="#fff"/></g>
<!-- Ps CS6 -->
<rect x="356" y="9" width="21" height="20" fill="#1c5fae"/><rect x="357" y="10" width="19" height="18" fill="#1d6cc4"/>
<text x="366.500" y="24" text-anchor="middle" font-family="Liberation Sans,sans-serif" font-weight="bold" font-size="12" fill="#8fd0ff">Ps</text>
<!-- Ps CC -->
<rect x="405.500" y="9.500" width="21" height="20" fill="#0b1d33" stroke="#2fa3f7" stroke-width="1.400"/>
<text x="416" y="24.500" text-anchor="middle" font-family="Liberation Sans,sans-serif" font-weight="bold" font-size="12" fill="#35a8fb">Ps</text>
<!-- cartoon -->
<rect x="453" y="8" width="24" height="24" fill="#fdfdfb"/><path d="M459 14c0-3 2-4 2.500-1 1.500-0.500 3-0.500 4.500 0 0.500-3 3-2 2.500 1 2 2 2 5 0 6.500 0.500 2 0.500 4-0.500 6h-8c-1-2-1-4-0.500-6-2-1.500-2.500-4.500-0.500-6.500z" fill="#f6ecd2"/><path d="M462 27c0 1.500 1 2.500 2.500 2.500s2.500-1 2.500-2.500z" fill="#e9a63a"/><path d="M462 18h1.500M466.500 18h1.500" stroke="#9a8a70" stroke-width="0.800"/>
</svg>
<svg width="416" height="40" viewBox="950 0 416 40" style="left:950px;top:1px">
<!-- ring icon -->
<rect x="968" y="12" width="16" height="16" rx="3.500" fill="#77777a"/><circle cx="976" cy="20" r="4.400" fill="#5c5c5f" stroke="#f2f2f2" stroke-width="2.300"/><path d="M979 16.500a4.400 4.400 0 0 1 1.300 3" fill="none" stroke="#b9b9bb" stroke-width="2.300"/>
<!-- 360 -->
<circle cx="1000" cy="20" r="8" fill="#f3d21f"/><path d="M993 24a8 8 0 0 0 14 0c-4 2-10 2-14 0z" fill="#4aa02c"/><path d="M993.500 15.500a8 8 0 0 1 6-3.500c-2 1-4 2-6 3.500z" fill="#4aa02c"/><path d="M1000 15v9M995.500 19.500h9" stroke="#1f7a1c" stroke-width="2.200"/>
<!-- nvidia -->
<rect x="1016" y="12" width="16" height="16" fill="#2c3640"/><path d="M1018.500 20c2-4 8-5 11-2-3-1-6 0-7 2 1 2 4 2.500 6 1-1.500 3-7.500 3-10-1z" fill="#76b900"/><circle cx="1024.500" cy="20" r="1.400" fill="#76b900"/>
<!-- speaker red -->
<path d="M1040.500 17.500h3l5-5v15l-5-5h-3z" fill="#e2461b"/><path d="M1043.500 17.500l5-5v15l-5-5z" fill="#f07a2b"/><path d="M1051.500 16v8M1054 17v6" stroke="#8a1d12" stroke-width="1"/>
<!-- clock x -->
<circle cx="1071" cy="20.500" r="7.500" fill="#f5c21b"/><circle cx="1071" cy="20.500" r="5" fill="#fff7d8"/><path d="M1071 20.500l4-6M1071 20.500l-2.500-2" stroke="#333" stroke-width="1.300"/><circle cx="1076" cy="25" r="4.300" fill="#e02b20"/><path d="M1074.200 23.200l3.600 3.600M1077.800 23.200l-3.600 3.600" stroke="#fff" stroke-width="1.400"/>
<!-- blue net -->
<rect x="1088" y="12" width="16" height="16" rx="2" fill="#1f8fe0"/><path d="M1088 24l16 0v2a2 2 0 0 1-2 2h-12a2 2 0 0 1-2-2z" fill="#d8b25a"/><path d="M1091 15h6v4h-6zM1096 20h6v4h-6zM1094 19v3h2" fill="none" stroke="#dff1ff" stroke-width="1"/>
<!-- QQ -->
<g transform="translate(1119 20.500) scale(1.180) translate(-1119 -21.500)"><ellipse cx="1119" cy="21.500" rx="5.500" ry="7" fill="#1a1a1a"/><ellipse cx="1119" cy="23.500" rx="3.600" ry="4.300" fill="#fff"/><circle cx="1117.300" cy="17.200" r="1.300" fill="#fff"/><circle cx="1120.700" cy="17.200" r="1.300" fill="#fff"/><circle cx="1117.600" cy="17.300" r=".5" fill="#111"/><circle cx="1120.400" cy="17.300" r=".5" fill="#111"/><ellipse cx="1119" cy="19.500" rx="2.400" ry="1" fill="#f5a623"/><path d="M1113.300 20.800c3 2 8.400 2 11.400 0v2c-3 1.600-8.400 1.600-11.400 0z" fill="#e0301e"/><path d="M1116.500 23l-1 3.500 1.500.3.800-3.300z" fill="#e0301e"/><path d="M1113.500 27.500h4.500v1.300h-5.500zM1120 27.500h4.500l1 1.300H1120z" fill="#f5a623"/></g>
<!-- battery plug -->
<rect x="1140.500" y="15.500" width="10" height="8" fill="none" stroke="#fff" stroke-width="1.300"/><rect x="1151" y="17.500" width="1.500" height="4" fill="#fff"/><rect x="1142" y="17" width="7" height="5" fill="#fff"/><path d="M1136 16v2h-1v3a2 2 0 0 0 2 2v2h1v-2a2 2 0 0 0 2-2v-3h-1v-2h-1v2h-1v-2z" fill="#fff"/>
<!-- wifi -->
<g fill="none" stroke="#fff" stroke-width="1.300"><path d="M1163.500 26a11 11 0 0 1 10.500-11.500" opacity=".55"/><path d="M1166.500 26a8 8 0 0 1 7.500-8.300"/><path d="M1169.500 26a5 5 0 0 1 4.500-5"/></g><circle cx="1173.300" cy="25.300" r="1.500" fill="#fff"/>
<!-- volume -->
<path d="M1184.500 17.500h3l4-4v13l-4-4h-3z" fill="none" stroke="#fff" stroke-width="1.100"/><path d="M1193.500 17.500a3.500 3.500 0 0 1 0 5M1195.800 15.500a6.500 6.500 0 0 1 0 9" fill="none" stroke="#fff" stroke-width="1"/><path d="M1198.200 13.500a9.500 9.500 0 0 1 0 13" fill="none" stroke="#fff" stroke-width="1" opacity=".5"/>
<text x="1209" y="24" font-family="Liberation Sans,sans-serif" font-size="12.500" fill="#fff">ENG</text>
<text x="1276" y="14.500" text-anchor="middle" font-family="Liberation Sans,sans-serif" font-size="13" letter-spacing=".3" fill="#fff">7:53</text>
<text x="1276.500" y="33.500" text-anchor="middle" font-family="Liberation Sans,sans-serif" font-size="13" letter-spacing=".55" fill="#fff">2017/7/7</text>
<!-- notification -->
<path d="M1325 12h16v11h-11l-3 3.500v-3.500h-2z" fill="#fff"/><path d="M1328 15h10M1328 17.500h10M1328 20h10" stroke="#140e0a" stroke-width="1"/>
<circle cx="1340.500" cy="27" r="7.500" fill="#2a2624" stroke="#8d8a88" stroke-width="1"/><text x="1340.500" y="31.500" text-anchor="middle" font-family="Liberation Sans,sans-serif" font-weight="bold" font-size="12" fill="#fff">1</text>
<rect x="1361" y="0" width="1" height="40" fill="#5a5654"/>
</svg>

</div>

</body>
</html>
